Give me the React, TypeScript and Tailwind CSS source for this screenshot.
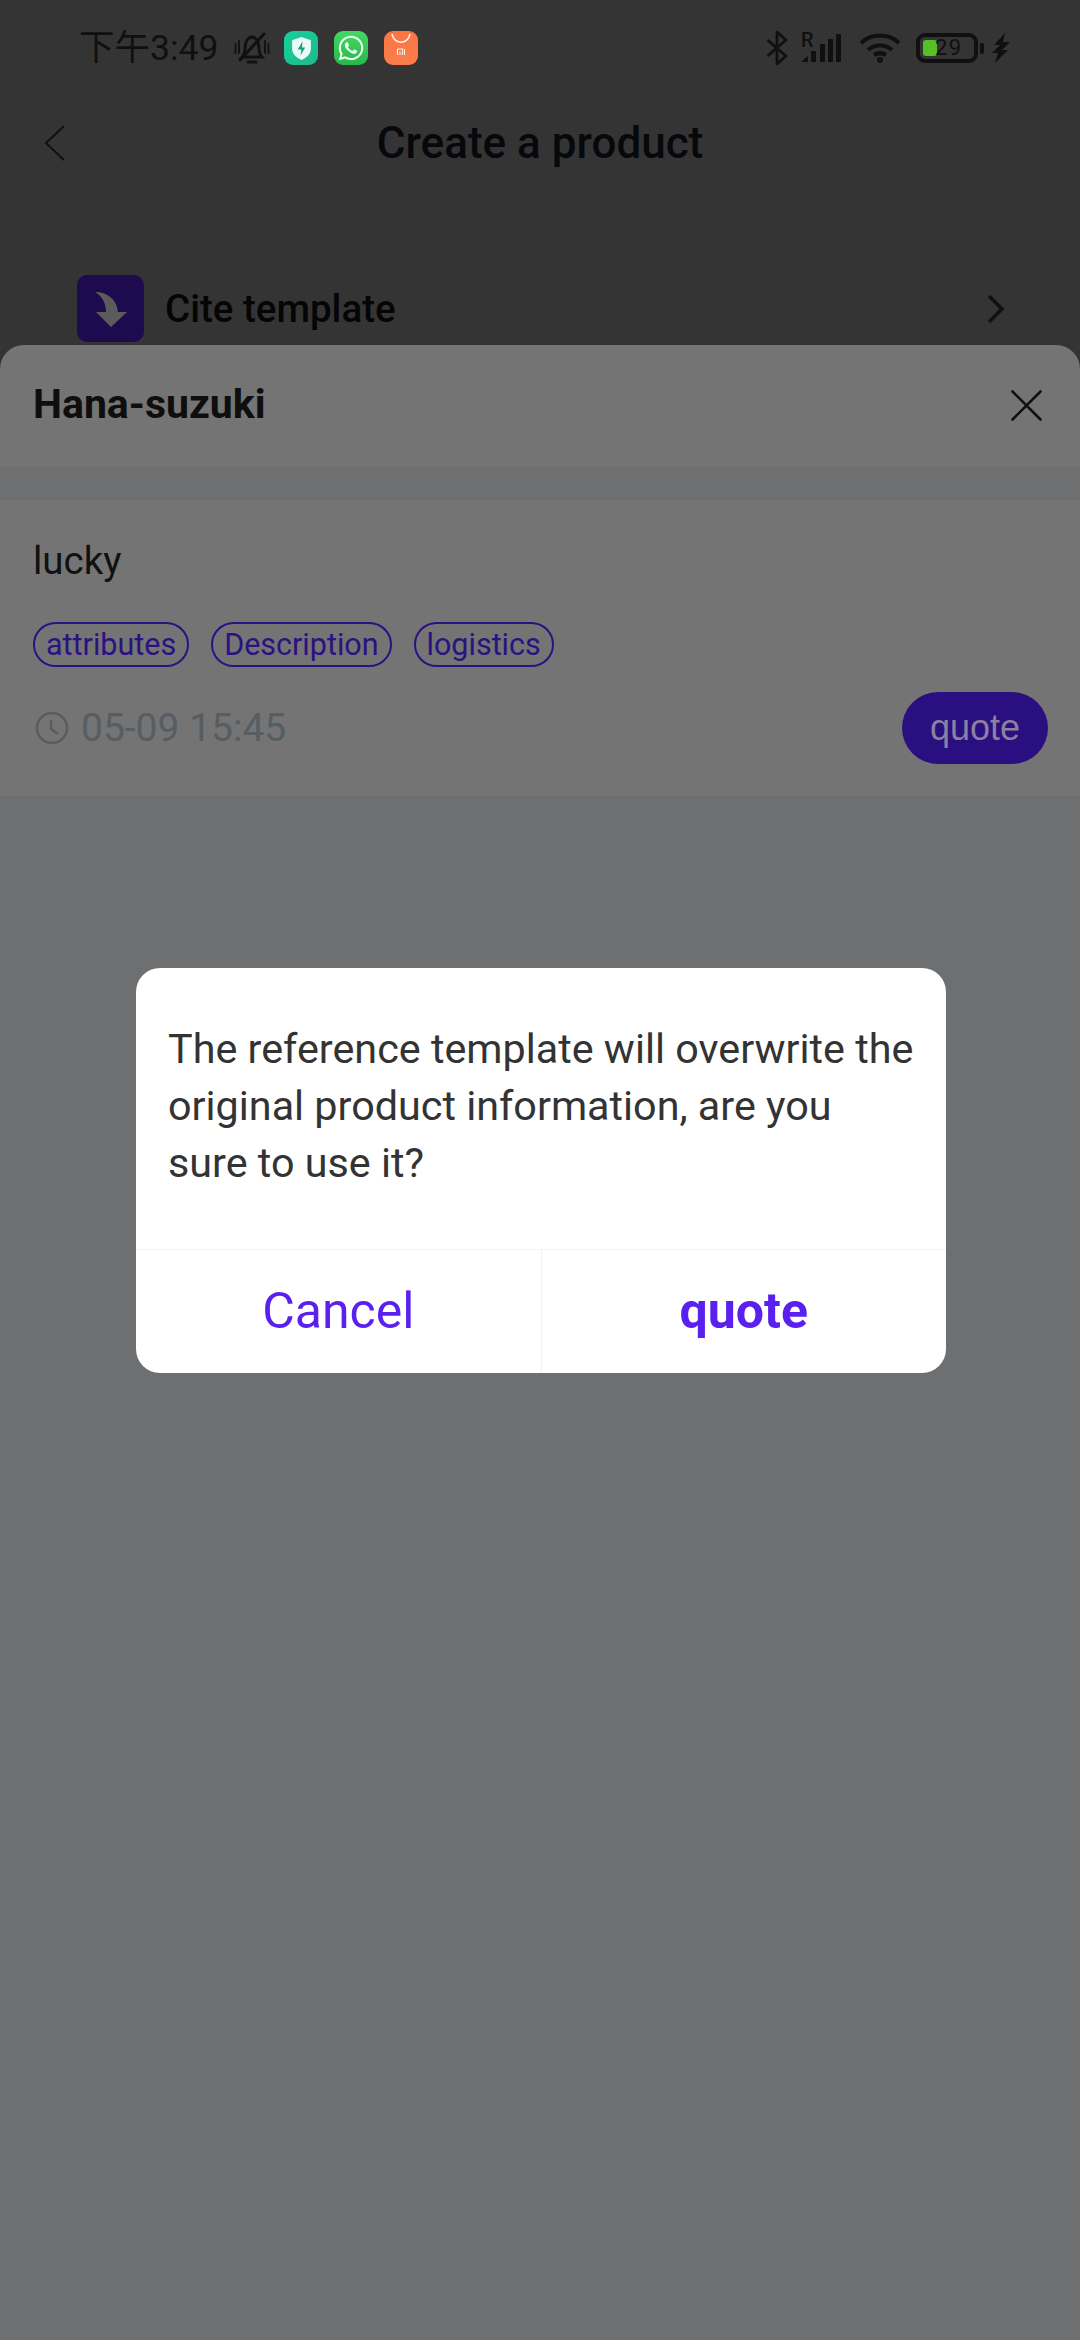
import React from "react";
import { FaWhatsapp } from "react-icons/fa";

const Bell = () => (
  <svg width="36" height="32" viewBox="0 0 36 32" fill="none" stroke="#101010" strokeWidth="2.800" strokeLinecap="round">
    <path d="M8 25c2-2 3-4 3-9 0-6 3-11 7-11s7 5 7 11c0 5 1 7 3 9z" />
    <path d="M14 30h8" strokeWidth="3" />
    <path d="M6 28 30 2" strokeWidth="3" />
    <path d="M1.500 12v9M5 9v12M31 9v12M34.500 12v9" strokeWidth="1.800" />
  </svg>
);

const ShieldApp = () => (
  <div className="w-[34px] h-[34px] rounded-[9px] bg-gradient-to-br from-[#14cf9c] to-[#1fb98c] flex items-center justify-center">
    <svg width="19" height="23" viewBox="0 0 18 22">
      <path d="M9 0 18 3v8c0 5-4 9-9 11-5-2-9-6-9-11V3z" fill="#e8fbf6" />
      <path d="M10 4 5.500 12H9l-1 6 4.500-8H9.500z" fill="#1a9c7c" />
    </svg>
  </div>
);

const WhatsappApp = () => (
  <div className="w-[34px] h-[34px] rounded-[9px] bg-gradient-to-b from-[#45d866] to-[#27b84a] flex items-center justify-center">
    <FaWhatsapp size={28} color="#ecfff0" />
  </div>
);

const MiApp = () => (
  <div className="w-[34px] h-[34px] rounded-[9px] bg-gradient-to-b from-[#fb7443] to-[#fb7d4b]">
    <svg width="34" height="34" viewBox="0 0 34 34" fill="none" stroke="#fff2ea">
      <path d="M8 3c2 11 16 11 18 0" strokeWidth="1.600" />
      <path d="M13.500 18h5v6M13.500 18v6M16 20.500v3.500M20.500 18v6" strokeWidth="1.100" />
    </svg>
  </div>
);

const StatusRight = () => (
  <div className="flex items-center h-[34px]">
    <svg width="22" height="34" viewBox="0 0 22 34" fill="none" stroke="#101010" strokeWidth="2.800">
      <path d="M1.500 9 20 25l-9 8V1l9 8L1.500 25" />
    </svg>
    <div className="relative ml-[13px] w-[43px] h-[34px]">
      <span className="absolute left-0 top-[-2px] text-[20px] leading-[22px] font-medium text-[#101010]">R</span>
      <svg width="43" height="30" viewBox="0 0 43 30" className="absolute left-0 top-[2px]" fill="#101010">
        <path d="M0 29 7 23v6zM10 29V18h5v11zM19 29V11h5v18zM27 29V6h5v23zM35 29V1h5v28z" />
      </svg>
    </div>
    <svg width="42" height="30" viewBox="0 0 42 30" className="ml-[15px]" fill="none" stroke="#101010" strokeWidth="4">
      <path d="M2 10C12 0 30 0 40 10M9 17c7-6 17-6 24 0" />
      <path d="M15 22c4-2.500 8-2.500 12 0" />
      <circle cx="21" cy="27" r="3" fill="#101010" stroke="none" />
    </svg>
    <div className="ml-[15px] relative w-[62px] h-[30px] rounded-[9px] border-[4px] border-[#101010]">
      <div className="absolute left-[3px] top-[3px] w-[14px] h-[16px] rounded-[3px] bg-[#56c026]" />
      <span className="absolute left-[15px] top-[-3px] text-[22px] leading-[28px] tracking-[1.500px] text-[#101010]">29</span>
    </div>
    <div className="ml-[2px] w-[4px] h-[11px] rounded-r-[2px] bg-[#101010]" />
    <svg width="18" height="30" viewBox="0 0 18 30" className="ml-[8px]" fill="#101010">
      <path d="M13 0 2 12h6L0 20h6L3 30l13-13h-6l8-8h-7z" />
    </svg>
  </div>
);

const Tag = ({ children }: { children: React.ReactNode }) => (
  <div className="h-[45px] px-[11px] rounded-full border-2 border-[#2a1280] text-[#2a1280] text-[30.500px] leading-[40px] flex items-center">
    {children}
  </div>
);

export default function App() {
  return (
    <div className="relative w-[1080px] h-[2340px] overflow-hidden bg-[#6e6f71] font-['Roboto',sans-serif]">
      <div className="h-[345px] overflow-hidden bg-[#343434]">
        <div className="h-[117px] pt-[31px] pl-[79px] pr-[70px] flex items-start justify-between">
          <div className="flex items-center h-[34px]">
            <span className="text-[35.500px] leading-[36px] text-[#101010] font-['Roboto','Noto_Sans_CJK_SC',sans-serif] w-[138px] whitespace-nowrap">下午3:49</span>
            <div className="ml-[17px]"><Bell /></div>
            <div className="flex items-center gap-[16px] ml-[14px]">
              <ShieldApp />
              <WhatsappApp />
              <MiApp />
            </div>
          </div>
          <StatusRight />
        </div>
        <div className="relative h-[52px] flex items-center justify-center">
          <svg width="22" height="36" viewBox="0 0 22 36" fill="none" stroke="#101010" strokeWidth="2" className="absolute left-[44px] top-[8px]">
            <path d="M20 1 2 18l18 17" />
          </svg>
          <span className="text-[44px] font-medium leading-[52px] text-[#06080b]">Create a product</span>
        </div>
        <div className="mt-[106px] pl-[77px] pr-[74px] flex items-center">
          <div className="w-[67px] h-[67px] rounded-[10px] bg-[#1d0a4f]">
            <svg width="67" height="67" viewBox="0 0 67 67" fill="#5b5b5b">
              <path d="M18 17C30 17 40 24 41 37H50L34 52 19 37H29C29 28 25 21 18 17z" />
            </svg>
          </div>
          <span className="ml-[21px] text-[38.500px] font-medium leading-[46px] text-[#050505]">Cite template</span>
          <svg width="20" height="30" viewBox="0 0 20 30" fill="none" stroke="#101010" strokeWidth="3.500" className="ml-auto">
            <path d="M3 2 16 15 3 28" />
          </svg>
        </div>
      </div>

      <div className="bg-[#343434]">
        <div className="h-[122px] rounded-t-[24px] bg-[#747474] pl-[33px] pr-[38px] pt-[36px] flex items-start justify-between">
          <span className="text-[41px] font-bold leading-[46px] text-[#0e0e0e]">Hana-suzuki</span>
          <svg width="31" height="31" viewBox="0 0 31 31" stroke="#101010" strokeWidth="2.600" strokeLinecap="round" className="mt-[9px]">
            <path d="M1.500 1.500 29.500 29.500M29.500 1.500 1.500 29.500" />
          </svg>
        </div>
      </div>
      <div className="h-[33px] bg-[#6e6f71]" />
      <div className="h-[296px] bg-[#747474] pl-[33px] pr-[32px] pt-[38px]">
        <div className="text-[38.500px] leading-[46px] text-[#111111]">lucky</div>
        <div className="mt-[38px] flex items-center gap-[22px]">
          <Tag>attributes</Tag>
          <Tag>Description</Tag>
          <Tag>logistics</Tag>
        </div>
        <div className="mt-[25px] flex items-center justify-between">
          <div className="flex items-center">
            <svg width="34" height="34" viewBox="0 0 34 34" fill="none" stroke="#565d63" strokeWidth="2.500" className="ml-[2px]">
              <circle cx="17" cy="17" r="15" />
              <path d="M16 9v9l7 5" />
            </svg>
            <span className="ml-[12px] text-[39px] leading-[46px] text-[#565d63]">05-09 15:45</span>
          </div>
          <div className="w-[146px] h-[72px] rounded-full bg-[#2a0f80] flex items-center justify-center text-[36px] text-[#8d7fa0] font-['Liberation_Sans',sans-serif]">
            quote
          </div>
        </div>
      </div>

      <div className="absolute left-[136px] top-[968px] w-[810px] h-[405px] rounded-[24px] bg-white flex flex-col">
        <div className="h-[281px] pl-[32px] pt-[53px] text-[41.300px] leading-[57px] text-[#333333] whitespace-nowrap">
          The reference template will overwrite the<br />original product information, are you<br />sure to use it?
        </div>
        <div className="flex-1 flex border-t border-[#f2f2f2]">
          <div className="flex-1 flex items-center justify-center text-[50px] text-[#5a20ee] border-r border-[#f2f2f2]">Cancel</div>
          <div className="flex-1 flex items-center justify-center text-[50px] font-bold text-[#5a20ee]">quote</div>
        </div>
      </div>
    </div>
  );
}
